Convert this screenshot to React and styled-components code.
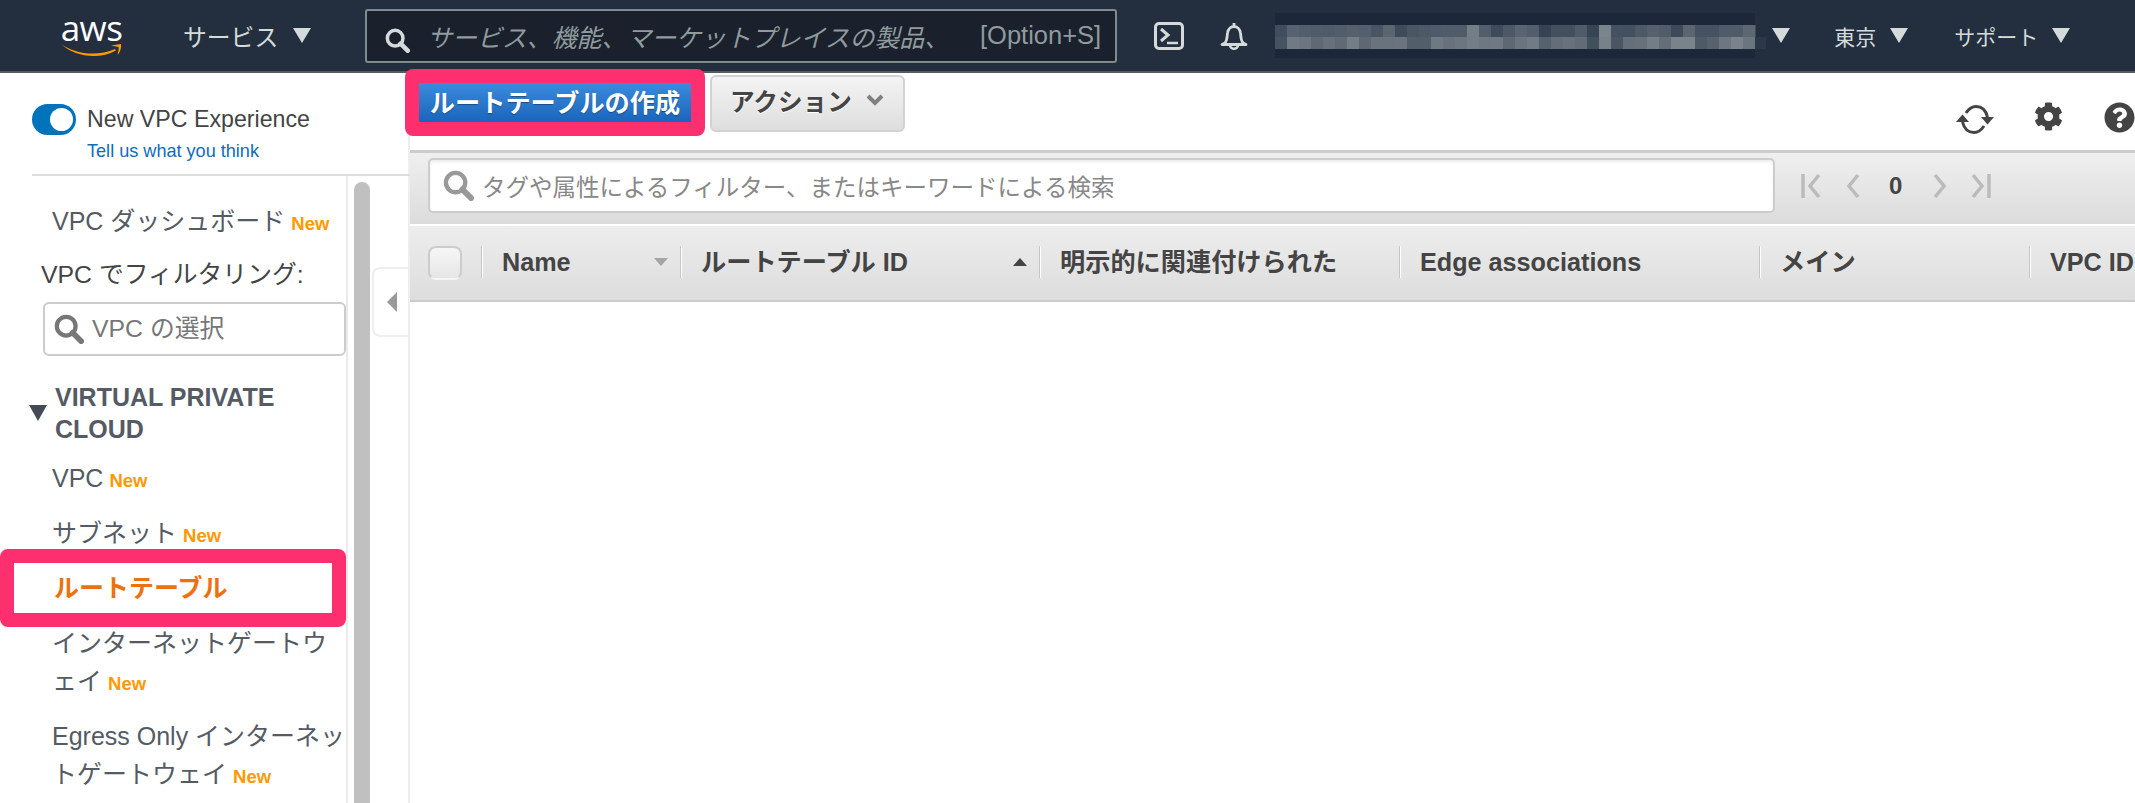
import React from "react";
import styled, { createGlobalStyle } from "styled-components";
import { FaCog, FaQuestionCircle } from "react-icons/fa";

const SANS = `"Liberation Sans", "Noto Sans CJK JP", sans-serif`;

const GlobalStyle = createGlobalStyle`
  html, body {
    margin: 0;
    padding: 0;
    background: #fff;
    font-family: ${SANS};
  }
  * {
    box-sizing: border-box;
  }
`;

const Page = styled.div`
  width: 2135px;
  height: 803px;
  overflow: hidden;
  display: flex;
  flex-direction: column;
`;

/* ---------- top bar ---------- */

const TopBar = styled.header`
  flex: 0 0 73px;
  display: flex;
  align-items: center;
  padding-left: 61px;
  background: #232f3e;
  border-bottom: 2px solid #545b64;
  color: #d5dbdb;
  font-size: 22px;
`;

const Logo = styled.div`
  width: 61px;
  display: flex;
  flex-direction: column;
  align-items: center;
  color: #fff;
  font-family: "Open Sans", sans-serif;
  font-size: 35px;
  line-height: 30px;
  letter-spacing: -0.5px;
`;

const Smile = styled.svg`
  display: block;
`;

const Caret = styled.span`
  display: inline-block;
  flex: none;
  width: 0;
  height: 0;
  margin-left: ${(p) => p.$left || 0}px;
  border-left: 9px solid transparent;
  border-right: 9px solid transparent;
  border-top: 15px solid #d5dbdb;
`;

const TopMenu = styled.div`
  display: flex;
  align-items: center;
  margin-left: ${(p) => p.$left}px;
  gap: ${(p) => p.$gap}px;
  font-size: ${(p) => p.$size}px;
  white-space: nowrap;
`;

const SearchBox = styled.div`
  width: 752px;
  height: 54px;
  margin-left: 54px;
  padding: 0 14px 0 18px;
  display: flex;
  align-items: center;
  background: #1a202c;
  border: 2px solid #7f8c8d;
  border-radius: 3px;
  color: #8f9b9d;
  font-size: 24.9px;
  white-space: nowrap;
`;

const SearchHint = styled.span`
  margin-left: 17px;
  font-style: italic;
`;

const Shortcut = styled.span`
  margin-left: auto;
  font-size: 25.5px;
`;

const TopIcon = styled.svg`
  display: block;
  flex: none;
  margin-left: ${(p) => p.$left}px;
`;

/* ---------- sidebar ---------- */

const Body = styled.div`
  flex: 1;
  display: flex;
  min-height: 0;
`;

const Sidebar = styled.aside`
  flex: 0 0 410px;
  display: flex;
  flex-direction: column;
  border-right: 2px solid #eee;
`;

const Experience = styled.div`
  flex: 0 0 103px;
  margin-left: 32px;
  margin-right: -2px;
  padding-top: 31px;
  display: flex;
  gap: 11px;
  border-bottom: 2px solid #ddd;
`;

const Toggle = styled.div`
  flex: none;
  width: 44px;
  height: 31px;
  padding: 4px 3px;
  display: flex;
  justify-content: flex-end;
  background: #0073bb;
  border-radius: 16px;
`;

const Knob = styled.span`
  width: 23px;
  height: 23px;
  border-radius: 50%;
  background: #fff;
`;

const ExperienceTitle = styled.div`
  color: #444;
  font-size: 23.2px;
  line-height: 31px;
`;

const Feedback = styled.div`
  margin-top: 4px;
  color: #0f6cbd;
  font-size: 18.1px;
  line-height: 24px;
`;

const SideBody = styled.div`
  flex: 1;
  display: flex;
  min-height: 0;
  overflow: hidden;
`;

const Nav = styled.nav`
  flex: 0 0 348px;
  padding-top: 26px;
  border-right: 2px solid #eaeaea;
  color: #545b64;
  font-size: 25px;
  line-height: 38px;
`;

const NavItem = styled.div`
  position: relative;
  margin-bottom: ${(p) => (p.$tight ? 16 : 17)}px;
  padding-left: ${(p) => (p.$active ? 54 : 52)}px;
  font-weight: ${(p) => (p.$active ? 700 : 400)};
  color: ${(p) => (p.$active ? "#ec7211" : "inherit")};
`;

const NewTag = styled.span`
  margin-left: 6px;
  color: #f90;
  font-size: 18.5px;
  font-weight: 700;
  line-height: 1;
`;

const FilterLabel = styled.div`
  padding-left: 41px;
  color: #444;
  font-size: 24.8px;
`;

const VpcSelect = styled.div`
  width: 303px;
  height: 54px;
  margin: 8px 0 0 43px;
  padding-left: 9px;
  display: flex;
  align-items: center;
  gap: 8px;
  border: 2px solid #ccc;
  border-radius: 6px;
  color: #777;
  font-size: 24.8px;
`;

const SectionTitle = styled.div`
  margin: 25px 0 14px;
  padding-left: 29px;
  display: flex;
  align-items: center;
  gap: 8px;
  color: #545b64;
  font-size: 25px;
  font-weight: 700;
  line-height: 32px;
`;

const SectionCaret = styled.span`
  flex: none;
  width: 0;
  height: 0;
  border-left: 9px solid transparent;
  border-right: 9px solid transparent;
  border-top: 16px solid #444b55;
`;

const Track = styled.div`
  flex: 0 0 24px;
  padding: 6px 0 0 6px;
`;

const Thumb = styled.div`
  width: 16px;
  height: 100%;
  background: #c0c0c0;
  border-radius: 8px 8px 0 0;
`;

const CollapseTab = styled.div`
  flex: none;
  width: 38px;
  height: 70px;
  margin: 91px -2px 0 0;
  display: flex;
  align-items: center;
  justify-content: center;
  background: #fff;
  border: 2px solid #eee;
  border-right: 0;
  border-radius: 8px 0 0 8px;
`;

const TabArrow = styled.span`
  width: 0;
  height: 0;
  border-top: 10px solid transparent;
  border-bottom: 10px solid transparent;
  border-right: 10px solid #999;
`;

/* the pink marks drawn on top of the screenshot */
const Callout = styled.span`
  position: absolute;
  top: ${(p) => p.$top}px;
  bottom: ${(p) => p.$top}px;
  left: ${(p) => p.$left}px;
  right: ${(p) => p.$right}px;
  border: 14px solid #fe2f6e;
  border-radius: 8px;
  pointer-events: none;
`;

/* ---------- main ---------- */

const Main = styled.main`
  flex: 1;
  min-width: 0;
  display: flex;
  flex-direction: column;
`;

const Toolbar = styled.div`
  flex: 0 0 77px;
  padding-left: 9px;
  display: flex;
  align-items: flex-start;
`;

const CreateButton = styled.div`
  position: relative;
  width: 272px;
  height: 39px;
  margin-top: 10px;
  padding-bottom: 3px;
  display: flex;
  align-items: center;
  justify-content: center;
  background: linear-gradient(#3b8bdc, #1a65bc);
  color: #fff;
  font-size: 25.2px;
  font-weight: 700;
  text-shadow: 0 1px 1px rgba(0, 0, 0, 0.35);
  white-space: nowrap;
`;

const ActionButton = styled.div`
  width: 195px;
  height: 57px;
  margin: 2px 0 0 19px;
  padding: 0 0 8px 18px;
  display: flex;
  align-items: center;
  gap: 14px;
  background: linear-gradient(#f4f4f4, #dedede);
  border: 2px solid #d2d2d2;
  border-radius: 6px;
  color: #444;
  font-size: 24.6px;
  font-weight: 700;
  text-shadow: 0 1px 0 #fff;
`;

const ToolIcons = styled.div`
  margin: 29px 0 0 auto;
  display: flex;
  align-items: flex-start;
  color: #444;
`;

const RefreshIcon = styled.svg`
  display: block;
  margin-top: 3px;
`;

const GearIcon = styled(FaCog)`
  margin-left: 40px;
  font-size: 29px;
`;

const HelpIcon = styled(FaQuestionCircle)`
  margin-left: 41px;
  font-size: 31px;
`;

const FilterBar = styled.div`
  flex: 0 0 74px;
  padding: 5px 0 0 18px;
  display: flex;
  align-items: flex-start;
  background: linear-gradient(#efefef, #dcdcdc);
  border-top: 3px solid #ccc;
`;

const FilterInput = styled.div`
  width: 1347px;
  height: 55px;
  padding-left: 13px;
  display: flex;
  align-items: center;
  gap: 8px;
  background: #fff;
  border: 2px solid #ccc;
  border-radius: 5px;
  box-shadow: inset 0 2px 3px rgba(0, 0, 0, 0.08);
  color: #888;
  font-size: 23.5px;
  white-space: nowrap;
`;

const Pager = styled.div`
  height: 55px;
  margin-left: 26px;
  display: flex;
  align-items: center;
`;

const PagerIcon = styled.svg`
  display: block;
  margin-left: ${(p) => p.$left}px;
  transform: ${(p) => (p.$flip ? "scaleX(-1)" : "none")};
`;

const PageNumber = styled.span`
  margin-left: 29px;
  color: #444;
  font-size: 24px;
  font-weight: 700;
`;

const TableHead = styled.div`
  flex: 0 0 76px;
  margin-top: 2px;
  padding-top: 20px;
  display: grid;
  grid-template-columns: 71px 199px 359px 360px 360px 270px 1fr;
  align-items: start;
  background: linear-gradient(#ededed, #dddddd);
  border-bottom: 2px solid #ccc;
  color: #444;
  font-size: 25.2px;
  font-weight: 700;
  white-space: nowrap;
`;

const CheckCell = styled.div`
  padding-left: 18px;
`;

const CheckBox = styled.div`
  width: 34px;
  height: 34px;
  border: 2px solid #ccc;
  border-bottom-color: transparent;
  border-radius: 8px;
  background: linear-gradient(#f6f6f6, #e6e6e6);
`;

const HeadCell = styled.div`
  height: 32px;
  padding: 0 12px 0 20px;
  display: flex;
  align-items: center;
  line-height: 32px;
  border-left: 1px solid #c6c6c6;
  box-shadow: inset 1px 0 0 #fff;
  overflow: hidden;
`;

const SortArrow = styled.span`
  flex: none;
  width: 0;
  height: 0;
  margin-left: auto;
  border-left: 7px solid transparent;
  border-right: 7px solid transparent;
  border-top: ${(p) => (p.$up ? "0" : "8px solid #a5a5a5")};
  border-bottom: ${(p) => (p.$up ? "8px solid #444" : "0")};
`;

/* ---------- drawings ---------- */

const MagnifierSvg = styled.svg`
  display: block;
  flex: none;
  margin-top: ${(p) => p.$top || 0}px;
`;

const Magnifier = ({ size, color, top }) => (
  <MagnifierSvg $top={top} width={size} height={size} viewBox="0 0 32 32">
    <circle cx="13" cy="13" r="10" fill="none" stroke={color} strokeWidth="4.5" />
    <path d="M20 20 L29 29" stroke={color} strokeWidth="6" strokeLinecap="round" />
  </MagnifierSvg>
);

const Refresh = () => (
  <RefreshIcon width="38" height="29" viewBox="0 0 38 29">
    <path d="M10 8 C13 3.5 17 1.5 20 1.5 C26 1.5 30 6 31.5 12" fill="none" stroke="#444" strokeWidth="3" />
    <path d="M28 21 C25 25.5 21 27.5 18 27.5 C12 27.5 8 23 6.5 17" fill="none" stroke="#444" strokeWidth="3" />
    <path d="M25 12 L38 12 L31.5 19.5 Z" fill="#444" />
    <path d="M0 17 L13 17 L6.5 9.5 Z" fill="#444" />
  </RefreshIcon>
);

const PageFirst = ({ flip }) => (
  <PagerIcon $flip={flip} $left={flip ? 24 : 0} width="20" height="26" viewBox="0 0 20 26">
    <path d="M2 1 V25" stroke="#bbb" strokeWidth="3.5" fill="none" />
    <path d="M18 2 L9 13 L18 24" stroke="#bbb" strokeWidth="3.5" fill="none" />
  </PagerIcon>
);

const PagePrev = ({ flip }) => (
  <PagerIcon $flip={flip} $left={flip ? 31 : 25} width="14" height="26" viewBox="0 0 14 26">
    <path d="M12 2 L3 13 L12 24" stroke="#bbb" strokeWidth="3.5" fill="none" />
  </PagerIcon>
);

/* mosaic over the account name: two visible rows, 12px cells */
const MOSAIC_TOP = [
  "#3f4d5c", "#566270", "#525e6b", "#505c6a", "#4f5b69", "#515d6b", "#55606c", "#535f6c", "#485564", "#5a6570",
  "#3f4b5a", "#4a5663", "#4d5966", "#4f5b6a", "#505c6a", "#505c6a", "#747e87", "#525e6b", "#3f4b5b", "#4d5866",
  "#5a6470", "#525e6b", "#354353", "#434f5d", "#434f5d", "#4f5b68", "#364454", "#7a848c", "#445160", "#435060",
  "#4d5966", "#55606c", "#505c69", "#3e4a59", "#5a6570", "#465262", "#465262", "#4f5b69", "#4f5b69", "#5d6771",
];
const MOSAIC_BOTTOM = [
  "#45525f", "#6f7a84", "#6c7680", "#5e6974", "#66717b", "#5f6a75", "#737d86", "#5d6872", "#68737d", "#68737d",
  "#6a747e", "#525e6a", "#525e6a", "#6f7983", "#67727c", "#6c7680", "#737d87", "#6e7882", "#6f7983", "#5d6873",
  "#6a747e", "#707b85", "#56616e", "#636e79", "#66717b", "#616c77", "#424f5d", "#77818a", "#4a5664", "#656f7a",
  "#677179", "#727d86", "#636e78", "#798389", "#79838a", "#4e5a68", "#57626d", "#6d7781", "#7a838c", "#6b7580",
];

const Mosaic = () => (
  <TopIcon $left={18} width="500" height="46" viewBox="0 0 500 46">
    <rect x="9" y="0" width="480" height="45" fill="#1c2839" />
    {MOSAIC_TOP.map((c, i) => (
      <rect key={`t${i}`} x={9 + i * 12} y="12" width="12.5" height="12.5" fill={c} />
    ))}
    {MOSAIC_BOTTOM.map((c, i) => (
      <rect key={`b${i}`} x={9 + i * 12} y="24" width="12.5" height="12" fill={c} />
    ))}
    <rect x="489" y="24" width="12" height="12" fill="#2b3848" />
  </TopIcon>
);

export default function App() {
  return (
    <Page>
      <GlobalStyle />
      <TopBar>
        <Logo>
          aws
          <Smile width="61" height="15" viewBox="0 0 61 15">
            <path d="M0 1 C14 11 36 14 54 6 L55 7.5 C38 17 14 14 0 1 Z" fill="#f90" />
            <path d="M50 2.5 L60 1 C60.5 4 59.5 9 56.5 12 C57 9 58 6 57.5 4 Z" fill="#f90" />
          </Smile>
        </Logo>
        <TopMenu $left={61} $gap={15} $size={23.8}>
          サービス <Caret />
        </TopMenu>
        <SearchBox>
          <Magnifier size={25} color="#d5dbdb" top={9} />
          <SearchHint>サービス、機能、マーケットプレイスの製品、</SearchHint>
          <Shortcut>[Option+S]</Shortcut>
        </SearchBox>
        <TopIcon $left={37} width="30" height="28" viewBox="0 0 30 28">
          <rect x="1.5" y="1.5" width="27" height="25" rx="3.5" fill="none" stroke="#d5dbdb" strokeWidth="3" />
          <path d="M7 7 L14 13 L7 19" fill="none" stroke="#d5dbdb" strokeWidth="3" />
          <path d="M13 21 H24" stroke="#d5dbdb" strokeWidth="2.5" />
        </TopIcon>
        <TopIcon $left={36} width="28" height="28" viewBox="0 0 28 28">
          <path
            d="M14 1 V4 M5 21 C7.5 18 7 14 7.5 11 C8 7 11 4.5 14 4.5 C17 4.5 20 7 20.5 11 C21 14 20.5 18 23 21 L26 22.5 H2 Z"
            fill="none"
            stroke="#d5dbdb"
            strokeWidth="2.8"
            strokeLinejoin="round"
          />
          <path d="M10 23 C10 28 18 28 18 23" fill="none" stroke="#d5dbdb" strokeWidth="2.6" />
        </TopIcon>
        <Mosaic />
        <Caret $left={6} />
        <TopMenu $left={44} $gap={14} $size={21}>
          東京 <Caret />
        </TopMenu>
        <TopMenu $left={46} $gap={14} $size={21}>
          サポート <Caret />
        </TopMenu>
      </TopBar>

      <Body>
        <Sidebar>
          <Experience>
            <Toggle>
              <Knob />
            </Toggle>
            <div>
              <ExperienceTitle>New VPC Experience</ExperienceTitle>
              <Feedback>Tell us what you think</Feedback>
            </div>
          </Experience>
          <SideBody>
            <Nav>
              <NavItem $tight>
                VPC ダッシュボード<NewTag>New</NewTag>
              </NavItem>
              <FilterLabel>VPC でフィルタリング:</FilterLabel>
              <VpcSelect>
                <Magnifier size={30} color="#777" />
                VPC の選択
              </VpcSelect>
              <SectionTitle>
                <SectionCaret />
                <span>VIRTUAL PRIVATE CLOUD</span>
              </SectionTitle>
              <NavItem>
                VPC<NewTag>New</NewTag>
              </NavItem>
              <NavItem>
                サブネット<NewTag>New</NewTag>
              </NavItem>
              <NavItem $active>
                ルートテーブル
                <Callout $top={-20} $left={0} $right={0} />
              </NavItem>
              <NavItem>
                インターネットゲートウェイ<NewTag>New</NewTag>
              </NavItem>
              <NavItem>
                Egress Only インターネットゲートウェイ<NewTag>New</NewTag>
              </NavItem>
            </Nav>
            <Track>
              <Thumb />
            </Track>
            <CollapseTab>
              <TabArrow />
            </CollapseTab>
          </SideBody>
        </Sidebar>

        <Main>
          <Toolbar>
            <CreateButton>
              ルートテーブルの作成
              <Callout $top={-14} $left={-14} $right={-14} />
            </CreateButton>
            <ActionButton>
              アクション
              <svg width="18" height="12" viewBox="0 0 18 12">
                <path d="M2 2 L9 9 L16 2" fill="none" stroke="#808080" strokeWidth="4" />
              </svg>
            </ActionButton>
            <ToolIcons>
              <Refresh />
              <GearIcon />
              <HelpIcon />
            </ToolIcons>
          </Toolbar>

          <FilterBar>
            <FilterInput>
              <Magnifier size={31} color="#999" />
              タグや属性によるフィルター、またはキーワードによる検索
            </FilterInput>
            <Pager>
              <PageFirst />
              <PagePrev />
              <PageNumber>0</PageNumber>
              <PagePrev flip />
              <PageFirst flip />
            </Pager>
          </FilterBar>

          <TableHead>
            <CheckCell>
              <CheckBox />
            </CheckCell>
            <HeadCell>
              Name
              <SortArrow />
            </HeadCell>
            <HeadCell>
              ルートテーブル ID
              <SortArrow $up />
            </HeadCell>
            <HeadCell>明示的に関連付けられた</HeadCell>
            <HeadCell>Edge associations</HeadCell>
            <HeadCell>メイン</HeadCell>
            <HeadCell>VPC ID</HeadCell>
          </TableHead>
        </Main>
      </Body>
    </Page>
  );
}
